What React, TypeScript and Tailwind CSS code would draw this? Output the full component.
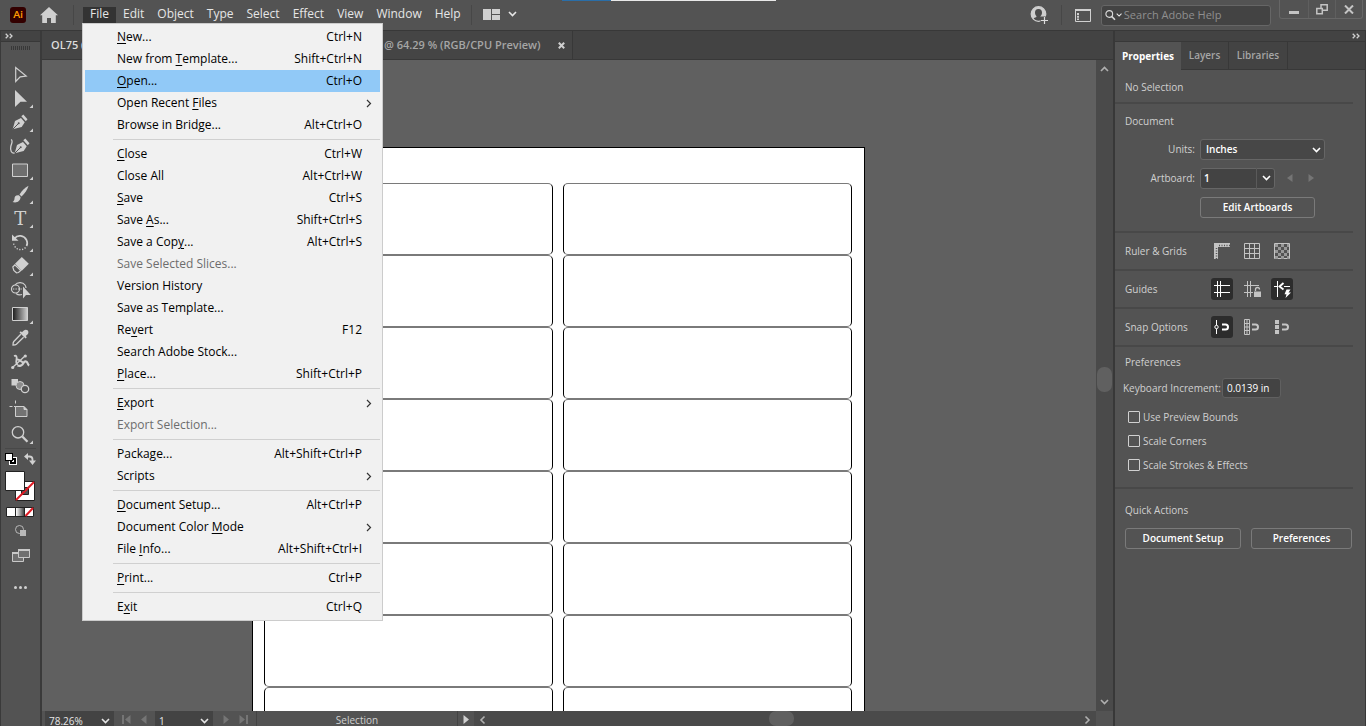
import React, { useState } from 'react';

type Entry = {
  label: string;
  hot?: number;
  keys?: string;
  sub?: boolean;
  disabled?: boolean;
};

// one inner array per group, groups are split by a separator line
const fileMenu: Entry[][] = [
  [
    { label: 'New...', hot: 0, keys: 'Ctrl+N' },
    { label: 'New from Template...', hot: 9, keys: 'Shift+Ctrl+N' },
    { label: 'Open...', hot: 0, keys: 'Ctrl+O' },
    { label: 'Open Recent Files', hot: 12, sub: true },
    { label: 'Browse in Bridge...', keys: 'Alt+Ctrl+O' },
  ],
  [
    { label: 'Close', hot: 0, keys: 'Ctrl+W' },
    { label: 'Close All', keys: 'Alt+Ctrl+W' },
    { label: 'Save', hot: 0, keys: 'Ctrl+S' },
    { label: 'Save As...', hot: 5, keys: 'Shift+Ctrl+S' },
    { label: 'Save a Copy...', hot: 10, keys: 'Alt+Ctrl+S' },
    { label: 'Save Selected Slices...', disabled: true },
    { label: 'Version History' },
    { label: 'Save as Template...' },
    { label: 'Revert', hot: 2, keys: 'F12' },
    { label: 'Search Adobe Stock...' },
    { label: 'Place...', hot: 0, keys: 'Shift+Ctrl+P' },
  ],
  [
    { label: 'Export', hot: 0, sub: true },
    { label: 'Export Selection...', disabled: true },
  ],
  [
    { label: 'Package...', hot: 5, keys: 'Alt+Shift+Ctrl+P' },
    { label: 'Scripts', sub: true },
  ],
  [
    { label: 'Document Setup...', hot: 0, keys: 'Alt+Ctrl+P' },
    { label: 'Document Color Mode', hot: 15, sub: true },
    { label: 'File Info...', hot: 5, keys: 'Alt+Shift+Ctrl+I' },
  ],
  [{ label: 'Print...', hot: 0, keys: 'Ctrl+P' }],
  [{ label: 'Exit', hot: 1, keys: 'Ctrl+Q' }],
];

const menus = ['Edit', 'Object', 'Type', 'Select', 'Effect', 'View', 'Window', 'Help'];

const Hot = ({ text, at }: { text: string; at?: number }) => {
  if (at === undefined) return <span>{text}</span>;
  return (
    <span>
      {text.slice(0, at)}
      <span className="underline underline-offset-2">{text[at]}</span>
      {text.slice(at + 1)}
    </span>
  );
};

const Chevron = ({ className = '' }: { className?: string }) => (
  <svg width="9" height="6" viewBox="0 0 9 6" fill="none" stroke="currentColor" strokeWidth="1.6" className={className}>
    <path d="M1 1l3.500 3.500L8 1" />
  </svg>
);

const DoubleArrow = () => (
  <svg width="8" height="6" viewBox="0 0 8 6" fill="none" stroke="#d0d0d0" strokeWidth="1.3">
    <path d="M.7.700L3 3 .7 5.300M4.700.700L7 3 4.700 5.300" />
  </svg>
);

const FileMenu = () => {
  const [active, setActive] = useState('Open...');
  return (
    <div
      role="menu"
      className="absolute left-0 top-full z-20 w-[301px] border border-[#cccccc] bg-[#f1f1f1] p-0.5 text-black"
    >
      {fileMenu.map((group, i) => (
        <div key={i}>
          {i > 0 && <div className="my-[3px] ml-7 h-px bg-[#d0d0d0]" />}
          {group.map((item) => (
            <button
              key={item.label}
              role="menuitem"
              disabled={item.disabled}
              onMouseEnter={() => setActive(item.label)}
              className={`flex h-[22px] w-full items-center justify-between pl-8 pr-[18px] whitespace-nowrap ${
                active === item.label ? 'bg-[#91c9f7]' : ''
              } ${item.disabled ? 'text-[#6d6d6d]' : ''}`}
            >
              <Hot text={item.label} at={item.hot} />
              {item.keys && <span>{item.keys}</span>}
              {item.sub && (
                <svg width="6" height="9" viewBox="0 0 6 9" fill="none" stroke="#333" strokeWidth="1.2" className="-mr-2.5">
                  <path d="M1 1l3.500 3.500L1 8" />
                </svg>
              )}
            </button>
          ))}
        </div>
      ))}
    </div>
  );
};

const Header = () => (
  <header className="relative flex h-[30px] shrink-0 items-center bg-[#535353] text-xs text-[#e6e6e6]">
    <div className="absolute left-[562px] top-0 flex h-px w-[214px]">
      <div className="w-[49px] bg-[#2a6ea8]" />
      <div className="flex-1 bg-[#e8e8e8]" />
    </div>
    <div className="ml-2.5 flex size-4 items-center justify-center rounded-[3px] bg-[#330000] font-[Lato] text-[10px] font-bold text-[#ff9a00]">
      Ai
    </div>
    <button aria-label="Home" className="ml-3.5">
      <svg width="18" height="16" viewBox="0 0 18 16" fill="#d0d0d0">
        <path d="M9 0L0 8.200h2.200V16H7v-5h4v5h4.800V8.200H18z" />
      </svg>
    </button>
    <div className="ml-[15px] h-5 w-px bg-[#474747]" />
    <nav className="ml-2 flex h-4 gap-px">
      <div className="relative">
        <button className="ml-px block h-4 bg-[#333333] px-[7px] pb-0.5 leading-[14px]">File</button>
        <FileMenu />
      </div>
      {menus.map((m) => (
        <button key={m} className="px-1.5 pb-0.5 leading-[14px]">
          {m}
        </button>
      ))}
    </nav>
    <div className="ml-1 h-5 w-px bg-[#474747]" />
    <button aria-label="Arrange documents" className="ml-[11px] flex items-center gap-2">
      <svg width="17" height="11" viewBox="0 0 17 11" fill="#d0d0d0" className="mb-0.5">
        <path d="M0 0h8v11H0zM9 0h8v5H9zM9 6h8v5H9z" />
      </svg>
      <Chevron className="mb-0.5" />
    </button>
    <div className="ml-auto flex items-center self-stretch">
      <button aria-label="Account">
        <svg width="19" height="19" viewBox="0 0 19 19">
          <circle cx="8.500" cy="8" r="7.300" fill="#cfcfcf" />
          <path d="M8.500 3c2.400 0 3.600 1.700 3.500 3.700 0 1.500-.7 2.500-1.400 3.300v1c1.500.6 2.700 1 3 2.200-2.600 2.600-7.600 2.600-10.200 0 .3-1.200 1.500-1.600 3-2.200v-1C5.700 9.200 5 8.200 5 6.700 4.900 4.700 6.100 3 8.500 3z" fill="#4b4b4b" />
          <circle cx="8.500" cy="8" r="7.300" fill="none" stroke="#cfcfcf" strokeWidth="1.200" />
          <path d="M10.500 10.500H19V19h-8.500z" fill="#535353" />
          <path d="M14.500 11v7M11 14.500h7" stroke="#dcdcdc" strokeWidth="1.200" />
        </svg>
      </button>
      <div className="ml-3 h-5 w-px bg-[#474747]" />
      <button aria-label="Panels" className="ml-[13px]">
        <svg width="16" height="13" viewBox="0 0 16 13" fill="none" stroke="#d0d0d0">
          <path d="M.5 1.500h15v11H.5z" />
          <path d="M0 1h16" strokeWidth="2" />
          <path d="M3 4v7" strokeWidth="2" strokeDasharray="2 .7" />
        </svg>
      </button>
      <label className="ml-2.5 flex h-[21px] w-[170px] items-center rounded-[3px] border border-[#666666] bg-[#434343] pl-[3px]">
        <svg width="12" height="12" viewBox="0 0 12 12" fill="none" stroke="#d8d8d8">
          <circle cx="4.800" cy="4.800" r="3.800" strokeWidth="1.300" />
          <path d="M7.500 7.500l3.800 3.800" strokeWidth="1.800" />
        </svg>
        <Chevron className="w-[7px]" />
        <input
          aria-label="Search Adobe Help"
          placeholder="Search Adobe Help"
          className="ml-0.5 w-full min-w-0 bg-transparent text-[11px] outline-none placeholder:text-[#8f8f8f]"
        />
      </label>
      <div className="mr-[3px] ml-2 flex h-[19px] self-start rounded-b-[3px] border border-t-0 border-[#666666]">
        <button aria-label="Minimize" className="flex w-7 items-center justify-center pt-1.5">
          <span className="h-[3px] w-2.5 bg-[#c4c4c4]" />
        </button>
        <button aria-label="Restore" className="flex w-7 items-center justify-center border-x border-[#5f5f5f]">
          <svg width="12" height="11" viewBox="0 0 12 11" fill="none" stroke="#c4c4c4" strokeWidth="1.500">
            <path d="M5 .8h6.200v5.500H5z" />
            <path d="M.8 4.500h5.500v5.200H.8z" fill="#535353" />
          </svg>
        </button>
        <button aria-label="Close" className="flex w-[26px] items-center justify-center">
          <svg width="10" height="9" viewBox="0 0 10 9" fill="none" stroke="#c4c4c4" strokeWidth="2">
            <path d="M1 .5l8 8M9 .5l-8 8" />
          </svg>
        </button>
      </div>
    </div>
  </header>
);

const nib = (
  <>
    <path d="M4.700 19.300L7 11l6-3 3.700 4.300-3 4.700z" fill="#d0d0d0" stroke="none" />
    <path d="M13.300 6.300l2-1.800 4.200 4.700-1.700 2z" fill="#d0d0d0" stroke="none" />
    <path d="M5 19l5.200-5.200" stroke="#535353" />
    <circle cx="10.700" cy="13.300" r="1" fill="#535353" stroke="none" />
  </>
);

const tools: { name: string; more?: boolean; art: React.ReactNode }[] = [
  { name: 'Selection', art: <path d="M7.700 5.500v14l4.500-4.700 6-.8z" strokeWidth="1.200" /> },
  { name: 'Direct Selection', more: true, art: <path d="M7 4v17l5.500-5.300H19z" fill="#d0d0d0" stroke="none" /> },
  { name: 'Pen', more: true, art: nib },
  {
    name: 'Curvature',
    art: (
      <>
        <g transform="translate(2 0)">{nib}</g>
        <path d="M3 5.500c2.500 1 .5 4-.2 7-.8 4 .7 7 3.700 6.500" strokeWidth="1.300" />
      </>
    ),
  },
  { name: 'Rectangle', more: true, art: <path d="M4.500 6h15v12.500h-15z" fill="#6f6f6f" /> },
  {
    name: 'Paintbrush',
    more: true,
    art: (
      <g fill="#d0d0d0" stroke="none">
        <path d="M20.500 3.800c-4 2.200-6.500 5-9 8.700l2 2c3.500-3.200 5.800-6.500 7-10.700z" />
        <path d="M10.800 13.200c-3.300-.4-4.200 1.300-4.300 3.200-.1 1.700-.7 2.700-2 3.600 3.500 1.300 7.800 0 8.100-4.900z" />
      </g>
    ),
  },
  {
    name: 'Type',
    more: true,
    art: (
      <text x="12.300" y="19" textAnchor="middle" fill="#d0d0d0" stroke="none" className="font-[DejaVu_Serif] text-[18px]">
        T
      </text>
    ),
  },
  {
    name: 'Rotate',
    more: true,
    art: (
      <>
        <path d="M6.500 8.500c3-4 9.500-3.300 12 1.500 1 2.200.9 4.500 0 6" strokeWidth="1.700" />
        <path d="M17.500 17.500c-3 3.200-8.500 3-11-1.500-.7-1.300-1-2.400-1-3.500" strokeWidth="1.400" strokeDasharray="1.200 1.600" />
        <path d="M4 4.500v6.300h6.500z" fill="#d0d0d0" stroke="none" />
      </>
    ),
  },
  {
    name: 'Eraser',
    more: true,
    art: (
      <>
        <path d="M13.800 3l7 6.800-7 7-6.800-7z" fill="#d0d0d0" stroke="none" />
        <path d="M6.800 10.800l-2 2.200 1 3.500 2.700 2.300 2-.3 2.300-2z" strokeWidth="1.200" />
      </>
    ),
  },
  {
    name: 'Shape Builder',
    more: false,
    art: (
      <>
        <circle cx="7.500" cy="11" r="4" strokeWidth="1.200" />
        <path d="M7 7c2.500-3.500 8-3 10 0 .8 1.200 1 2 1 3M8 15.500c2 1.500 4 1.700 6 1" strokeWidth="1.200" />
        <path d="M5 11h9" strokeDasharray="1.300 1.200" />
        <path d="M15 8.500v12l3-3.500h4.800z" fill="#d0d0d0" stroke="none" />
      </>
    ),
  },
  { name: 'Gradient', more: true, art: <path d="M4.500 5.500h15v13h-15z" fill="url(#ramp)" /> },
  {
    name: 'Eyedropper',
    art: (
      <>
        <path d="M12.800 8.300l-7 7.200c-.8 1-.8 2.500-.8 3.500 1 0 2.500 0 3.400-.8l7.200-7" strokeWidth="1.300" />
        <path d="M11.500 6.500l6 6 1.300-1.300-1-1.200c1.500-1.200 2.800-2.400 2.600-4-.2-1.500-1.300-2.400-2.700-2.300-1.300.1-2.300 1.200-3.700 2.600L12.800 5.200z" fill="#d0d0d0" stroke="none" />
      </>
    ),
  },
  {
    name: 'Puppet Warp',
    art: (
      <>
        <path d="M6 6c2.500-1 3 1 2.500 3.500-.5 2.700-.5 4.500 1.300 5.300" strokeWidth="1.800" />
        <path d="M4.500 17.500l13-12" strokeWidth="1.300" />
        <path d="M9.500 15.500c2.500 1 5-.3 6-2.500 1.200-2.500 3.300-2 4 0 .3 1 .7 2 1.700 2.500" strokeWidth="2.200" />
        <path d="M9 9.500c2.500-.5 4 2.500 6 3" strokeWidth="2" />
        <circle cx="4.700" cy="17.500" r="1.600" fill="#d0d0d0" stroke="none" />
        <circle cx="17.300" cy="6" r="1.600" fill="#d0d0d0" stroke="none" />
      </>
    ),
  },
  {
    name: 'Blend',
    art: (
      <>
        <path d="M3.500 5H10v6.500H3.500z" fill="#d0d0d0" stroke="none" />
        <circle cx="12" cy="11.500" r="4" fill="#8c8c8c" strokeWidth="1" />
        <circle cx="17" cy="15" r="3.700" fill="#535353" strokeWidth="1.300" />
      </>
    ),
  },
  {
    name: 'Artboard',
    art: (
      <>
        <path d="M7.500 8.500H16l3 3v7H7.500z" fill="#737373" />
        <path d="M16 8.500v3h3" fill="#d0d0d0" />
        <path d="M1.500 8.500h3M7.500 2.500v3M6 8.500h1.500" />
      </>
    ),
  },
  {
    name: 'Zoom',
    more: true,
    art: (
      <>
        <circle cx="10" cy="10.300" r="5.700" strokeWidth="1.300" />
        <path d="M14.300 14.500l5.200 5.200" strokeWidth="2.300" />
      </>
    ),
  },
];

const Toolbar = () => (
  <aside className="flex w-[42px] shrink-0 flex-col border-r-2 border-l border-[#3a3a3a] bg-[#535353]">
    <div className="flex h-[11px] items-center border-b border-[#383838] bg-[#434343] pl-1">
      <DoubleArrow />
    </div>
    <div className="mx-auto mt-1 h-1 w-[19px] bg-[repeating-linear-gradient(90deg,#383838_0_1px,#535353_1px_2px)]" />
    <div className="mt-3 ml-[7px] flex flex-col">
      {tools.map((t) => (
        <button key={t.name} aria-label={t.name} className="h-6 w-[26px]">
          <svg width="26" height="24" viewBox="0 0 26 24" fill="none" stroke="#d0d0d0" className="block">
            <defs>
              <linearGradient id="ramp">
                <stop offset="0" stopColor="#1a1a1a" />
                <stop offset="1" stopColor="#d0d0d0" />
              </linearGradient>
            </defs>
            {t.art}
            {t.more && <path d="M25 18.500V22h-3.500z" fill="#d0d0d0" stroke="none" />}
          </svg>
        </button>
      ))}
    </div>
    <div className="mx-1 mt-0.5 h-px bg-[#484848]" />
    <div className="mt-1 flex justify-between px-1">
      <button aria-label="Default fill and stroke">
        <svg width="12" height="12" viewBox="0 0 12 12" className="block">
          <path d="M4 4h8v8H4z" fill="#fff" />
          <path d="M5 5h6v6H5z" fill="#000" />
          <path d="M7 7h2v2H7z" fill="#fff" />
          <path d="M0 0h8v8H0z" fill="#000" />
          <path d="M1 1h6v6H1z" fill="#fff" />
        </svg>
      </button>
      <button aria-label="Swap fill and stroke">
        <svg width="12" height="12" viewBox="0 0 12 12" className="block">
          <path d="M3 3.500h2.500c2 0 3 1 3 3V8" fill="none" stroke="#d0d0d0" strokeWidth="1.800" />
          <path d="M4 0v7L0 3.500zM5 7.500h7L8.500 12z" fill="#d0d0d0" />
        </svg>
      </button>
    </div>
    <svg width="30" height="32" viewBox="0 0 30 32" className="mt-[5px] ml-1 block">
      <path d="M10.500 11.500h19v19h-19z" fill="#fff" stroke="#222" />
      <path d="M16.500 17.500h7v7h-7z" fill="#535353" stroke="#222" />
      <path d="M11 30L29 12" stroke="#e01b24" strokeWidth="2" />
      <path d="M.5 1.500h19v19H.5z" fill="#fff" stroke="#222" />
    </svg>
    <svg width="28" height="10" viewBox="0 0 28 10" className="mt-[5px] ml-[5px] block">
      <defs>
        <linearGradient id="mini">
          <stop offset="0" stopColor="#fff" />
          <stop offset="1" stopColor="#444" />
        </linearGradient>
      </defs>
      <path d="M.5.500h27v9H.5z" fill="#fff" stroke="#222" />
      <path d="M10 1h8v8h-8z" fill="url(#mini)" />
      <path d="M9.500 0v10M18.500 0v10" stroke="#222" />
      <path d="M19.500 9L27 1" stroke="#e01b24" strokeWidth="2" />
    </svg>
    <button aria-label="Drawing mode" className="mx-auto mt-2">
      <svg width="12" height="12" viewBox="0 0 12 12" className="block">
        <circle cx="4.500" cy="4.500" r="4" fill="none" stroke="#b8b8b8" />
        <path d="M5 5h6v6H5z" fill="#b8b8b8" />
      </svg>
    </button>
    <button aria-label="Screen mode" className="mx-auto mt-3">
      <svg width="18" height="13" viewBox="0 0 18 13" fill="#6f6f6f" stroke="#c8c8c8" className="block">
        <path d="M.5 3.500h11v9H.5z" />
        <path d="M0 4h11" strokeWidth="2" />
        <path d="M6.500.500h11v8h-11z" />
        <path d="M6 1h12" strokeWidth="2" />
      </svg>
    </button>
    <button aria-label="Edit toolbar" className="mx-auto mt-6 flex gap-0.5">
      <span className="size-[3px] rounded-full bg-[#d0d0d0]" />
      <span className="size-[3px] rounded-full bg-[#d0d0d0]" />
      <span className="size-[3px] rounded-full bg-[#d0d0d0]" />
    </button>
  </aside>
);

const LabelColumn = () => (
  <div className="w-[289px]">
    {Array.from({ length: 8 }, (_, i) => (
      <div key={i} className="h-[72px] rounded-[5px] border border-x-black border-y-[#7a7a7a]" />
    ))}
  </div>
);

const StatusBar = () => (
  <footer className="flex h-[15px] shrink-0 items-start overflow-hidden bg-[#4a4a4a] text-[10px] text-[#e6e6e6]">
    <div className="flex h-5 items-center border-r border-[#434343] bg-[#535353] pl-[3px]">
      <input aria-label="Zoom level" defaultValue="78.26%" className="h-5 w-[51px] bg-[#434343] pl-1 outline-none" />
      <button aria-label="Zoom presets" className="flex h-5 w-[18px] items-center justify-center bg-[#434343]">
        <Chevron />
      </button>
      <button aria-label="First artboard" className="ml-2">
        <svg width="9" height="9" viewBox="0 0 9 9" fill="#757575" className="mb-1">
          <path d="M0 0h2v9H0zM8.500 0v9L3 4.500z" />
        </svg>
      </button>
      <button aria-label="Previous artboard" className="ml-2.5">
        <svg width="6" height="9" viewBox="0 0 6 9" fill="#757575" className="mb-1">
          <path d="M5.500 0v9L0 4.500z" />
        </svg>
      </button>
      <input aria-label="Artboard number" defaultValue="1" className="ml-2 h-5 w-10 bg-[#434343] pl-1 outline-none" />
      <button aria-label="Artboard list" className="flex h-5 w-[18px] items-center justify-center bg-[#434343]">
        <Chevron />
      </button>
      <button aria-label="Next artboard" className="ml-2.5">
        <svg width="6" height="9" viewBox="0 0 6 9" fill="#757575" className="mb-1">
          <path d="M.5 0v9L6 4.500z" />
        </svg>
      </button>
      <button aria-label="Last artboard" className="mr-2 ml-2.5">
        <svg width="9" height="9" viewBox="0 0 9 9" fill="#757575" className="mb-1">
          <path d="M7 0h2v9H7zM.5 0v9L6 4.500z" />
        </svg>
      </button>
    </div>
    <div className="h-[15px] w-[200px] bg-[#535353] pt-[3px] text-center leading-3 text-[#d0d0d0]">Selection</div>
    <button aria-label="Status options" className="flex h-[15px] w-[17px] items-center justify-center border-l border-[#434343] bg-[#535353]">
      <svg width="6" height="9" viewBox="0 0 6 9" fill="#d0d0d0" className="mt-0.5">
        <path d="M.5 0v9L6 4.500z" />
      </svg>
    </button>
    <div className="flex flex-1 items-center bg-[#4a4a4a] px-1">
      <Chevron className="mt-0.5 rotate-90 text-[#b0b0b0]" />
      <div className="ml-[46%] h-[15px] w-[25px] rounded-[7px] bg-[#606060]" />
      <Chevron className="mt-0.5 ml-auto -rotate-90 text-[#b0b0b0]" />
    </div>
    <div className="h-[15px] w-[17px] bg-[#535353]" />
  </footer>
);

const Workspace = () => (
  <main className="flex min-w-0 flex-1 flex-col">
    <div className="flex h-[29px] shrink-0 border-b border-[#383838] bg-[#434343] text-[11px] font-semibold text-[#a6a6a6]">
      <div className="flex items-center border-r border-[#383838] bg-[#454545] pl-[9px]">
        <span className="w-[333px] text-[#dcdcdc]">OL75 (</span>
        <span className="whitespace-nowrap">@ 64.29 % (RGB/CPU Preview)</span>
        <button aria-label="Close document" className="mr-[7px] ml-[17px]">
          <svg width="7" height="7" viewBox="0 0 7 7" stroke="#d0d0d0" strokeWidth="2">
            <path d="M.8.800l5.400 5.400M6.200.800L.8 6.200" />
          </svg>
        </button>
      </div>
    </div>
    <div className="flex min-h-0 flex-1">
      <div className="min-w-0 flex-1 overflow-hidden bg-[#606060] pt-[87px] pl-[210px]">
        <div className="flex w-[613px] gap-2.5 border border-black bg-white px-[11px] pt-[35px]">
          <LabelColumn />
          <LabelColumn />
        </div>
      </div>
      <div className="flex w-[17px] shrink-0 flex-col items-center bg-[#4a4a4a] py-1.5">
        <Chevron className="rotate-180 text-[#b0b0b0]" />
        <div className="flex-[49]" />
        <div className="h-[25px] w-[15px] rounded-[7px] bg-[#606060]" />
        <div className="flex-[51]" />
        <Chevron className="text-[#b0b0b0]" />
      </div>
    </div>
    <StatusBar />
  </main>
);

const Rule = () => <div className="mr-3 h-0.5 shrink-0 bg-[#484848]" />;

const IconButton = ({ name, on, children }: { name: string; on?: boolean; children: React.ReactNode }) => (
  <button aria-label={name} className={`size-[22px] rounded-[3px] ${on ? 'bg-[#2c2c2c]' : ''}`}>
    <svg width="22" height="22" viewBox="0 0 22 22" fill="none" stroke={on ? '#ffffff' : '#c4c4c4'} className="block">
      {children}
    </svg>
  </button>
);

const IconRow = ({ title, children }: { title: string; children: React.ReactNode }) => (
  <div className="flex h-9 items-center pl-2.5">
    <span className="w-[86px]">{title}</span>
    <div className="flex gap-2">{children}</div>
  </div>
);

// shared magnet shape of the snap buttons
const Magnet = () => <path d="M11 8.500h3.500a2.500 2.500 0 010 5H11" strokeWidth="2" />;

const checks = ['Use Preview Bounds', 'Scale Corners', 'Scale Strokes & Effects'];

const PropertiesPanel = () => (
  <aside className="flex w-[253px] shrink-0 flex-col border-r border-l-2 border-[#383838] bg-[#535353] text-[10px] font-medium text-[#d0d0d0]">
    <div className="flex h-[11px] shrink-0 items-center justify-end border-b border-[#383838] bg-[#434343] pr-[5px]">
      <DoubleArrow />
    </div>
    <div className="flex h-[28px] shrink-0 border-b border-[#383838] bg-[#434343] text-[#a6a6a6]">
      <button className="-mb-px w-[66px] bg-[#535353] font-bold text-white">Properties</button>
      <button className="w-[48px] border-r border-[#383838] font-semibold">Layers</button>
      <button className="w-[59px] border-r border-[#383838] font-semibold">Libraries</button>
    </div>

    <div className="flex h-8 items-center pt-0.5 pl-2.5">No Selection</div>
    <Rule />

    <div className="flex h-[127px] flex-col pt-[9px] pl-2.5">
      <h2 className="leading-4">Document</h2>
      <div className="mt-2.5 flex h-5 items-center">
        <label htmlFor="units" className="w-[70px] text-right">Units:</label>
        <div className="relative ml-[5px]">
          <select id="units" className="block h-[21px] w-[125px] appearance-none rounded-[3px] border border-[#666666] bg-[#474747] pl-[5px] font-semibold text-white">
            <option>Inches</option>
          </select>
          <Chevron className="pointer-events-none absolute top-2 right-1 text-white" />
        </div>
      </div>
      <div className="mt-[9px] flex h-5 items-center">
        <label htmlFor="artboard" className="w-[70px] text-right">Artboard:</label>
        <div className="relative ml-[5px]">
          <select id="artboard" className="block h-[21px] w-[75px] appearance-none rounded-[3px] border border-[#666666] bg-[#434343] pl-[3px] font-semibold text-white">
            <option>1</option>
          </select>
          <div className="pointer-events-none absolute inset-y-0 right-0 flex w-[19px] items-center justify-center border-l border-[#5a5a5a] text-white">
            <Chevron />
          </div>
        </div>
        <button aria-label="Previous artboard" className="ml-3">
          <svg width="6" height="8" viewBox="0 0 6 8" fill="#757575">
            <path d="M5.500 0v8L0 4z" />
          </svg>
        </button>
        <button aria-label="Next artboard" className="ml-[15px]">
          <svg width="6" height="8" viewBox="0 0 6 8" fill="#757575">
            <path d="M.5 0v8L6 4z" />
          </svg>
        </button>
      </div>
      <button className="mt-[9px] ml-[75px] h-[21px] w-[115px] rounded-[3px] border border-[#7a7a7a] font-semibold text-white">
        Edit Artboards
      </button>
    </div>

    <Rule />
    <IconRow title="Ruler & Grids">
      <IconButton name="Show rulers">
        <path d="M3 5h16M5 3v16" strokeWidth="4" />
        <path d="M8 5.500h11M5.500 8v11" stroke="#535353" strokeWidth="1.500" strokeDasharray="1 1.500" />
      </IconButton>
      <IconButton name="Show grid">
        <path d="M3.500 3.500h15v15h-15zM8.500 3.500v15M13.500 3.500v15M3.500 8.500h15M3.500 13.500h15" />
      </IconButton>
      <IconButton name="Show transparency grid">
        <path d="M3.500 3.500h15v15h-15z" />
        <path d="M4 5.500h14M4 11.500h14M4 17.500h14" stroke="#999" strokeWidth="3" strokeDasharray="3 3" />
        <path d="M7 8.500h11M7 14.500h11" stroke="#999" strokeWidth="3" strokeDasharray="3 3" />
      </IconButton>
    </IconRow>
    <Rule />
    <IconRow title="Guides">
      <IconButton name="Show guides" on>
        <path d="M6.500 3v16M9.500 3v16M3 7.500h16M3 14.500h16" />
      </IconButton>
      <IconButton name="Lock guides">
        <path d="M6.500 3v16M9.500 3v16M3 7.500h15M3 14.500h9" />
        <path d="M13 13.500h7V19h-7z" fill="#c4c4c4" stroke="none" />
        <path d="M14.500 13v-1.500a2 2 0 014 0" strokeWidth="1.300" />
      </IconButton>
      <IconButton name="Smart guides" on>
        <path d="M3 8.500h4M13 8.500h6M6.500 3v16" />
        <path d="M12.500 5L8.500 8.500l4 3" strokeWidth="1.800" />
        <path d="M15.500 11.500h4L17.500 14.500H20L14.500 20l1-3.800H13.500z" fill="#fff" stroke="none" />
      </IconButton>
    </IconRow>
    <Rule />
    <IconRow title="Snap Options">
      <IconButton name="Snap to point" on>
        <path d="M5.500 4v14" />
        <circle cx="5.500" cy="11" r="1.700" fill="#2c2c2c" />
        <Magnet />
      </IconButton>
      <IconButton name="Snap to grid">
        <path d="M3.500 3.500h5v15h-5zM6 3.500v15M3 7.500h6M3 11h6M3 14.500h6" />
        <Magnet />
      </IconButton>
      <IconButton name="Snap to pixel">
        <path d="M6 4v4M6 9v4M6 14v4" strokeWidth="4" />
        <Magnet />
      </IconButton>
    </IconRow>
    <Rule />

    <div className="flex h-[140px] flex-col pt-[7px] pl-2">
      <h2 className="pl-0.5 leading-4">Preferences</h2>
      <div className="mt-2 flex h-5 items-center">
        <label htmlFor="increment" className="w-[99px] whitespace-nowrap">Keyboard Increment:</label>
        <input
          id="increment"
          defaultValue="0.0139 in"
          className="h-5 w-[59px] rounded-[3px] border border-[#606060] bg-[#434343] pl-1 text-white outline-none"
        />
      </div>
      <div className="mt-[7px]">
        {checks.map((c) => (
          <label key={c} className="flex h-6 items-center gap-[3px] pl-[5px]">
            <input type="checkbox" className="size-3 appearance-none rounded-[1px] border border-[#d0d0d0] checked:bg-[#d0d0d0]" />
            {c}
          </label>
        ))}
      </div>
    </div>

    <Rule />
    <div className="flex flex-col pt-[13px] pr-[13px] pl-2.5">
      <h2 className="leading-4">Quick Actions</h2>
      <div className="mt-2.5 flex gap-2.5 font-semibold text-white">
        <button className="h-[21px] w-[116px] rounded-[3px] border border-[#7a7a7a]">Document Setup</button>
        <button className="h-[21px] flex-1 rounded-[3px] border border-[#7a7a7a]">Preferences</button>
      </div>
    </div>
  </aside>
);

const App: React.FC = () => (
  <div className="flex h-screen flex-col overflow-hidden bg-[#535353] font-['Open_Sans','Noto_Sans',sans-serif]">
    <Header />
    <div className="flex min-h-0 flex-1 border-t border-[#383838]">
      <Toolbar />
      <Workspace />
      <PropertiesPanel />
    </div>
  </div>
);

export default App;
